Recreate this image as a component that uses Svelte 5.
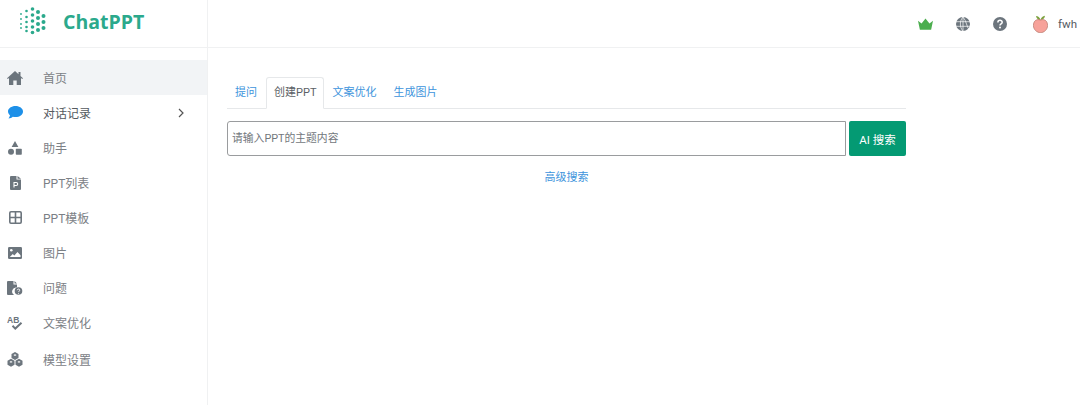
<script>
  const menu = [
    { key: "home", label: "首页", active: true },
    { key: "chat", label: "对话记录", arrow: true, dark: true },
    { key: "shapes", label: "助手" },
    { key: "ppt", label: "PPT列表" },
    { key: "grid", label: "PPT模板" },
    { key: "image", label: "图片" },
    { key: "question", label: "问题" },
    { key: "spell", label: "文案优化" },
    { key: "cubes", label: "模型设置", last: true }
  ];
  const tabs = ["提问", "创建PPT", "文案优化", "生成图片"];

  // logo dots: column x, radius, y positions
  const columns = [
    { x: 1, r: 0.9, ys: [7, 12, 17, 21] },
    { x: 6.5, r: 1.3, ys: [4, 10, 15, 20, 24] },
    { x: 12.5, r: 1.8, ys: [2, 8, 14, 20, 25.5] },
    { x: 18, r: 2, ys: [5, 11, 17, 23] },
    { x: 23.5, r: 2, ys: [9, 15, 21] }
  ];
</script>

<div class="page">
  <aside class="sidebar">
    <div class="brand">
      <svg class="logo" viewBox="0 0 26 28" width="26" height="28">
        {#each columns as col}
          {#each col.ys as y}
            <circle cx={col.x} cy={y} r={col.r} fill="#2ba98c" />
          {/each}
        {/each}
      </svg>
      <span class="brand-name">ChatPPT</span>
    </div>
    <nav class="menu">
      {#each menu as item}
        <div class="menu-item" class:active={item.active} class:dark={item.dark} class:last={item.last}>
          <span class="menu-icon">
            {#if item.key === "home"}
              <svg viewBox="0 0 16 14" width="16" height="14"><path d="M8 0 0 7.200l.8.9L2 7.100V14h4.300V9.400h3.400V14H14V7.100l1.200 1 .8-.9L13.500 5V1h-2v2.200z" fill="#6c757d" /></svg>
            {:else if item.key === "chat"}
              <svg viewBox="0 0 15 13" width="15" height="13"><path d="M7.500 0C3.400 0 0 2.400 0 5.500c0 1.500.8 2.800 2 3.800-.2 1.100-.8 2.200-1.500 3.200 1.700-.1 3.200-.8 4.300-1.700.8.200 1.700.3 2.700.3 4.100 0 7.500-2.500 7.500-5.600S11.600 0 7.500 0z" fill="#1e90e8" /></svg>
            {:else if item.key === "shapes"}
              <svg viewBox="0 0 14 14" width="14" height="14"><path d="M7 0 3.600 6h6.800z" fill="#6c757d" /><circle cx="3" cy="10.800" r="3" fill="#6c757d" /><rect x="7.800" y="7.800" width="6" height="6" rx=".7" fill="#6c757d" /></svg>
            {:else if item.key === "ppt"}
              <svg viewBox="0 0 11 14" width="11" height="14"><path d="M1 0h5.500v3.500H11V13a1 1 0 0 1-1 1H1a1 1 0 0 1-1-1V1a1 1 0 0 1 1-1zM7.500 0 11 2.700H7.500z" fill="#6c757d" /><path d="M4 11.500V6.500h2.200a1.500 1.500 0 0 1 0 3H4" fill="none" stroke="#fff" stroke-width="1.100" /></svg>
            {:else if item.key === "grid"}
              <svg viewBox="0 0 13 13" width="13" height="13"><rect x=".8" y=".8" width="11.400" height="11.400" rx="1.200" fill="none" stroke="#6c757d" stroke-width="1.600" /><path d="M6.500 1v11M1 6.500h11" stroke="#6c757d" stroke-width="1.600" /></svg>
            {:else if item.key === "image"}
              <svg viewBox="0 0 14 12" width="14" height="12"><rect width="14" height="12" rx="1.200" fill="#6c757d" /><circle cx="3.300" cy="3.200" r="1.300" fill="#fff" /><path d="m1.800 10 3-3 1.500 1.500L9.500 5l3 3.200V10z" fill="#fff" /></svg>
            {:else if item.key === "question"}
              <svg viewBox="0 0 16 14" width="16" height="14"><path d="M1 0h5.500v3.500H10v3.100A4 4 0 0 0 7.200 14H1a1 1 0 0 1-1-1V1a1 1 0 0 1 1-1zM7.500 0 10 2.500H7.500z" fill="#6c757d" /><circle cx="11.500" cy="10" r="3.800" fill="#6c757d" /><path d="M10.300 9.200c0-1.500 2.500-1.500 2.500 0 0 1-1.300.9-1.300 1.800" fill="none" stroke="#fff" stroke-width=".9" /><circle cx="11.500" cy="12.300" r=".5" fill="#fff" /></svg>
            {:else if item.key === "spell"}
              <svg viewBox="0 0 16 14" width="16" height="14"><text x="0" y="7" class="ab">AB</text><path d="M5.500 9.800 8.300 12.600 14.500 6.800" fill="none" stroke="#6c757d" stroke-width="2" /></svg>
            {:else}
              <svg viewBox="0 0 16 15" width="16" height="15">
                <path d="M8 0 11.500 2v4L8 8 4.500 6V2z" fill="#6c757d" />
                <path d="M4 6.800 7.500 8.800v4L4 14.800.5 12.800v-4z" fill="#6c757d" />
                <path d="M12 6.800 15.500 8.800v4L12 14.800 8.500 12.800v-4z" fill="#6c757d" />
                <path d="M8 2.200 9.600 3.100 8 4 6.400 3.100zM4 9 5.600 9.900 4 10.800 2.400 9.900zM12 9 13.600 9.900 12 10.800 10.400 9.900z" fill="#fff" />
              </svg>
            {/if}
          </span>
          <span class="menu-label">{item.label}</span>
          {#if item.arrow}
            <svg class="chevron" viewBox="0 0 6 10" width="6" height="10"><path d="m1 1 4 4-4 4" fill="none" stroke="#555" stroke-width="1.200" /></svg>
          {/if}
        </div>
      {/each}
    </nav>
  </aside>

  <div class="content">
    <header class="topbar">
      <svg viewBox="0 0 16 12" width="15" height="12"><path d="M0 2.500 3.800 5.500 8 0l4.200 5.500L16 2.500 14 12H2z" fill="#4cae4f" /></svg>
      <svg viewBox="0 0 14 14" width="14" height="14">
        <circle cx="7" cy="7" r="7" fill="#6c757d" />
        <path d="M0 4.700h14M0 9.300h14M7 0v14M7 0C3.500 3.500 3.500 10.500 7 14M7 0c3.500 3.500 3.500 10.500 7 14" fill="none" stroke="#fff" stroke-width=".7" />
      </svg>
      <svg viewBox="0 0 14 14" width="14" height="14">
        <circle cx="7" cy="7" r="7" fill="#6c757d" />
        <path d="M4.900 5.400c0-2.700 4.300-2.700 4.300-.2 0 1.700-2.200 1.600-2.200 3.200" fill="none" stroke="#fff" stroke-width="1.500" />
        <circle cx="7" cy="10.500" r="1" fill="#fff" />
      </svg>
      <div class="user">
        <svg viewBox="0 0 15 18" width="15" height="18">
          <path d="M7.500 5C6.800 2.500 5 1 3 1c.5 2.500 2.200 4 4.500 4z" fill="#7da23f" />
          <path d="M7.500 5c.3-2.300 2-3.800 4.500-4.200C11.700 3.300 10 4.800 7.500 5z" fill="#7da23f" />
          <path d="M7.500 5C3.500 3.600.4 6 .4 10.500c0 4 3.500 7.200 7.100 7.200s7.100-3.200 7.100-7.200C14.600 6 11.500 3.600 7.500 5z" fill="#f7a29a" stroke="#a9695c" stroke-width=".6" />
        </svg>
        <span class="user-name">fwh</span>
      </div>
    </header>

    <main class="main">
      <div class="panel">
        <ul class="tabs">
          {#each tabs as tab, i}
            <li class="tab" class:selected={i === 1}>{tab}</li>
          {/each}
        </ul>
        <div class="search">
          <input class="search-input" placeholder="请输入PPT的主题内容" />
          <button class="search-btn">AI 搜索</button>
        </div>
        <a class="advanced" href="#advanced">高级搜索</a>
      </div>
    </main>
  </div>
</div>

<style>
  :global(body) {
    background: #fff;
    font-family: "Roboto", "Noto Sans CJK SC", sans-serif;
  }

  .page {
    display: flex;
    width: 1080px;
    height: 405px;
    overflow: hidden;
    font-size: 12px;
  }

  .sidebar {
    width: 207px;
    flex: none;
    border-right: 1px solid #f0f1f2;
  }

  .brand {
    display: flex;
    align-items: center;
    height: 47px;
    padding-left: 20px;
    gap: 17px;
    border-bottom: 1px solid #f0f1f2;
    box-sizing: content-box;
  }

  .logo {
    margin-top: -5px;
  }

  .brand-name {
    margin-top: -5px;
    font-family: "Open Sans", sans-serif;
    font-weight: 700;
    font-size: 19.500px;
    color: #2ba98c;
  }

  .menu {
    padding-top: 12px;
  }

  .menu-item {
    display: flex;
    align-items: center;
    height: 35px;
    padding-left: 7px;
    color: #7b8085;
  }

  .menu-item.active {
    background: #f2f4f6;
  }

  .menu-item.dark {
    color: #555a5f;
  }

  .menu-item.last {
    margin-top: 2px;
  }

  .menu-icon {
    display: flex;
    align-items: center;
    justify-content: center;
    width: 16px;
    margin-right: 20px;
    flex: none;
  }

  .menu-label {
    flex: 1;
  }

  .chevron {
    margin-right: 23px;
  }

  .ab {
    font-family: "Liberation Sans", sans-serif;
    font-size: 8.500px;
    font-weight: 700;
    fill: #6c757d;
  }

  .content {
    flex: 1;
    min-width: 0;
  }

  .topbar {
    display: flex;
    align-items: center;
    justify-content: flex-end;
    gap: 23px;
    height: 47px;
    padding-right: 2px;
    border-bottom: 1px solid #f0f1f2;
    box-sizing: content-box;
  }

  .user {
    display: flex;
    align-items: center;
    gap: 10px;
    margin-left: 3px;
  }

  .user-name {
    color: #555a5f;
    font-size: 11.500px;
    width: 20px;
  }

  .main {
    padding: 29px 0 0 19px;
  }

  .panel {
    width: 679px;
  }

  .tabs {
    display: flex;
    gap: 1px;
    height: 31px;
    margin: 0;
    padding: 0;
    list-style: none;
    border-bottom: 1px solid #e6e8ea;
  }

  .tab {
    height: 31px;
    padding: 0 8px;
    line-height: 32px;
    color: #3d94dc;
    font-size: 11px;
    box-sizing: border-box;
  }

  .tab.selected {
    padding: 0 7px;
    margin-right: -1px;
    color: #5c6166;
    background: #fff;
    border: 1px solid #e6e8ea;
    border-bottom-color: #fff;
    border-radius: 3px 3px 0 0;
    line-height: 30px;
    height: 32px;
  }

  .search {
    display: flex;
    gap: 3px;
    margin-top: 12px;
  }

  .search-input {
    flex: 1;
    min-width: 0;
    height: 35px;
    padding: 0 4px;
    border: 1px solid #9a9c9e;
    border-radius: 3px 0 0 3px;
    font: inherit;
    font-size: 10.800px;
    box-sizing: border-box;
    outline: none;
  }

  .search-input::placeholder {
    color: #72777c;
    opacity: 1;
  }

  .search-btn {
    width: 57px;
    height: 35px;
    padding: 0;
    border: none;
    border-radius: 2px;
    background: #049a73;
    color: #fff;
    font: inherit;
    font-size: 11.500px;
  }

  .advanced {
    display: block;
    margin-top: 12px;
    text-align: center;
    color: #3d94dc;
    font-size: 11px;
    text-decoration: none;
  }
</style>
